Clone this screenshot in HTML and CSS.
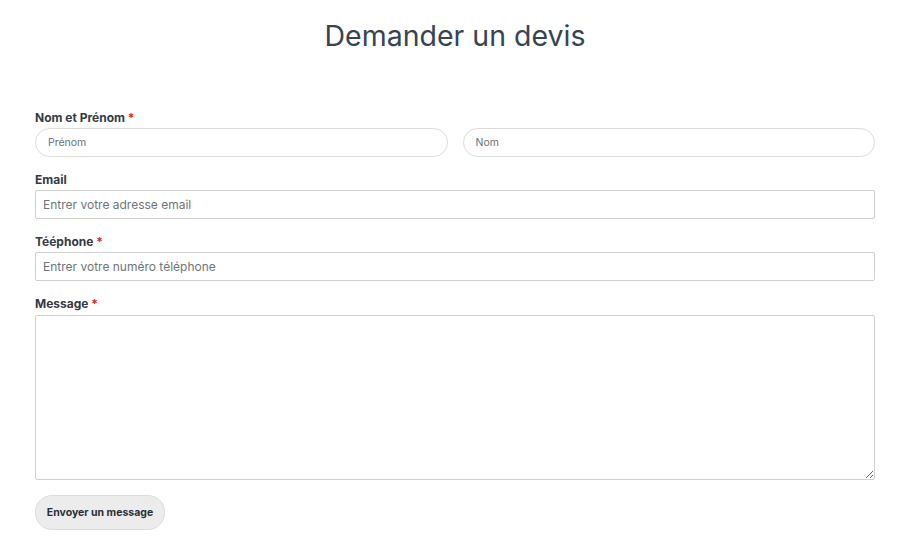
FILE: index.html
```html
<!DOCTYPE html>
<html lang="fr">
<head>
<meta charset="utf-8">
<title>Demander un devis</title>
<link rel="stylesheet" href="styles.css">
</head>
<body>
<div class="page">
  <h1 class="title">Demander un devis</h1>
  <form class="form">
    <div class="group">
      <label class="label">Nom et Prénom <span class="req">*</span></label>
      <div class="row">
        <input class="pill" type="text" placeholder="Prénom">
        <input class="pill" type="text" placeholder="Nom">
      </div>
    </div>
    <div class="group">
      <label class="label">Email</label>
      <input class="field" type="email" placeholder="Entrer votre adresse email">
    </div>
    <div class="group">
      <label class="label">Tééphone <span class="req">*</span></label>
      <input class="field" type="tel" placeholder="Entrer votre numéro téléphone">
    </div>
    <div class="group">
      <label class="label">Message <span class="req">*</span></label>
      <textarea class="area"></textarea>
    </div>
    <button class="btn" type="button">Envoyer un message</button>
  </form>
</div>
</body>
</html>
```
FILE: styles.css
```css
* { box-sizing: border-box; }
html, body { margin: 0; padding: 0; background: #fff; }
body { font-family: Inter, "Noto Sans", sans-serif; color: #333; }
.page { margin: 0 26px 0 35px; }
.title {
  margin: 18px 0 0;
  font-size: 28.5px;
  line-height: 36px;
  font-weight: 400;
  color: #3a4352;
  text-align: center;
}
.form { margin-top: 56px; display: flex; flex-direction: column; }
.group { display: flex; flex-direction: column; margin-bottom: 15px; }
.label {
  font-size: 12px;
  line-height: 16px;
  font-weight: 700;
  color: #333a44;
  margin-bottom: 2px;
}
.req { color: #e02424; }
.row { display: flex; gap: 15px; }
.pill {
  flex: 1;
  min-width: 0;
  height: 29px;
  border: 1px solid #dcdcdc;
  border-radius: 15px;
  padding: 0 12px;
  font-family: inherit;
  font-size: 10.5px;
  color: #333;
  outline: none;
}
.pill::placeholder { color: #6b6f76; }
.field {
  height: 29px;
  border: 1px solid #cfcfcf;
  border-radius: 2px;
  padding: 0 7px;
  font-family: inherit;
  font-size: 12px;
  color: #333;
  outline: none;
}
.field::placeholder { color: #6f747b; }
.area {
  margin-top: 1px;
  height: 165px;
  border: 1px solid #cfcfcf;
  border-radius: 2px;
  padding: 7px;
  font-family: inherit;
  font-size: 12px;
  outline: none;
}
.btn {
  align-self: flex-start;
  margin-top: 0;
  height: 35px;
  width: 130px;
  border: 1px solid #dcdcdc;
  border-radius: 17px;
  background: #ececec;
  font-family: inherit;
  font-size: 10.5px;
  font-weight: 700;
  color: #2a2f36;
  padding: 0;
}
```
